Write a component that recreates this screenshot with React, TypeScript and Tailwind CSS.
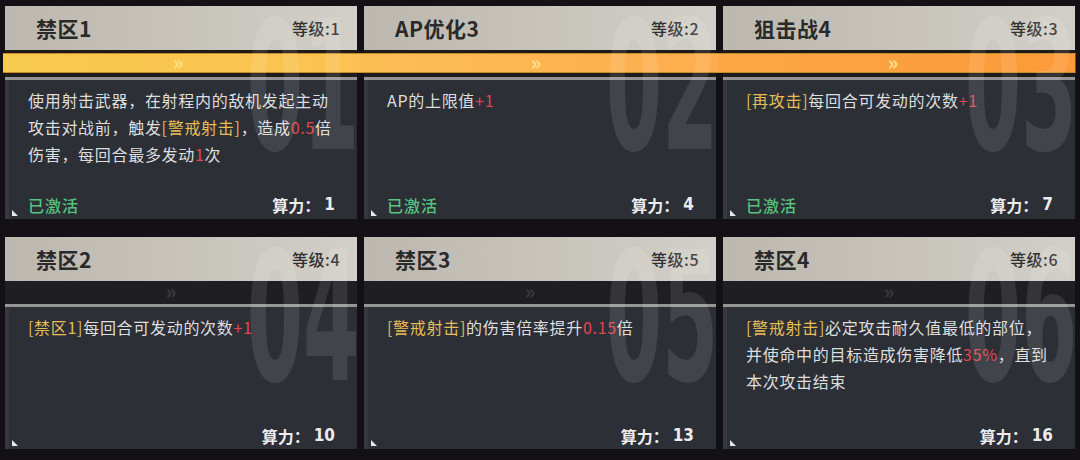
import React from 'react';

type Seg = [string, ('y' | 'r')?];

type Card = {
  title: string;
  level: number;
  mark: string;
  lines: Seg[][];
  active: boolean;
  power: number;
  bar: string;
};

const cards: Card[] = [
  {
    title: '禁区1',
    level: 1,
    mark: '01',
    lines: [
      [['使用射击武器，在射程内的敌机发起主动']],
      [['攻击对战前，触发'], ['[警戒射击]', 'y'], ['，造成'], ['0.5', 'r'], ['倍']],
      [['伤害，每回合最多发动'], ['1', 'r'], ['次']],
    ],
    active: true,
    power: 1,
    bar: 'bg-gradient-to-r from-[#f6cb4c] to-[#fcc152] -ml-[2px] -mr-[4px]',
  },
  {
    title: 'AP优化3',
    level: 2,
    mark: '02',
    lines: [[['AP的上限值'], ['+1', 'r']]],
    active: true,
    power: 4,
    bar: 'bg-gradient-to-r from-[#fdbe56] to-[#fdac4d] -mx-[4px]',
  },
  {
    title: '狙击战4',
    level: 3,
    mark: '03',
    lines: [[['[再攻击]', 'y'], ['每回合可发动的次数'], ['+1', 'r']]],
    active: true,
    power: 7,
    bar: 'bg-gradient-to-r from-[#fca746] to-[#fb9a38] -ml-[4px] -mr-[1px] border-r border-r-[#7a4a18]',
  },
  {
    title: '禁区2',
    level: 4,
    mark: '04',
    lines: [[['[禁区1]', 'y'], ['每回合可发动的次数'], ['+1', 'r']]],
    active: false,
    power: 10,
    bar: '',
  },
  {
    title: '禁区3',
    level: 5,
    mark: '05',
    lines: [[['[警戒射击]', 'y'], ['的伤害倍率提升'], ['0.15', 'r'], ['倍']]],
    active: false,
    power: 13,
    bar: '',
  },
  {
    title: '禁区4',
    level: 6,
    mark: '06',
    lines: [
      [['[警戒射击]', 'y'], ['必定攻击耐久值最低的部位，']],
      [['并使命中的目标造成伤害降低'], ['35%', 'r'], ['，直到']],
      [['本次攻击结束']],
    ],
    active: false,
    power: 16,
    bar: '',
  },
];

const SkillCard: React.FC<{ card: Card; top: boolean }> = ({ card, top }) => {
  return (
    <div className="relative flex flex-col">
      <div className="h-[44px] flex items-center justify-between pl-[31px] pr-[17px] bg-gradient-to-r from-[#bcb8af] to-[#d2cfc8]">
        <span className="text-[21px] font-bold text-[#2a2a2a] tracking-[0.5px] leading-none">{card.title}</span>
        <span className="text-[16px] font-medium text-[#303030] leading-none tracking-[0.5px]">等级:{card.level}</span>
      </div>
      {top ? (
        <>
          <div className="h-[3px] bg-[#1d1a17]"></div>
          <div className={`h-[20px] flex items-center justify-center border-y border-[#c68a2c] ${card.bar}`}>
            <span className="text-[20px] font-bold leading-none text-[#ffe08c] -mt-[3px] -ml-[8px]">»</span>
          </div>
          <div className="h-[4px] bg-[#1d1b1c]"></div>
        </>
      ) : (
        <div className="h-[23px] flex items-center justify-center bg-[#1f1f23]">
          <span className="text-[20px] font-bold leading-none text-[#3a3a40] -mt-[3px] -ml-[20px]">»</span>
        </div>
      )}
      <div className="h-[3px] bg-[#969696]"></div>
      <div className={`relative ${top ? 'h-[139px]' : 'h-[142px]'} flex flex-col bg-[#2c2f36] border-l-[4px] border-[#363940] pl-[19px] pr-[22px] pt-[7px]`}>
        <div className="text-[16px] leading-[27px] tracking-[0.7px] text-[#dedede] whitespace-nowrap">
          {card.lines.map((line, i) => (
            <div key={i}>
              {line.map(([t, k], j) => (
                <span key={j} className={k === 'y' ? 'text-[#e6bd57]' : k === 'r' ? 'text-[#e4464f]' : ''}>
                  {t}
                </span>
              ))}
            </div>
          ))}
        </div>
        <div className={`mt-auto flex items-center justify-between h-[20px] ${top ? 'mb-[4px]' : 'mb-[3px]'}`}>
          <span className="text-[16px] font-medium text-[#56c47f] tracking-[1px]">{card.active ? '已激活' : ''}</span>
          <span className="text-[16px] font-bold text-[#ececec] flex items-center">
            算力：
            <span className="font-['DejaVu_Sans_Condensed',sans-serif] text-[17px] ml-[4px]">{card.power}</span>
          </span>
        </div>
        <div className="absolute left-[3px] bottom-[3px] w-0 h-0 border-l-[6px] border-t-[6px] border-l-[#e8e8e8] border-t-transparent"></div>
      </div>
      <div className="absolute inset-0 overflow-hidden pointer-events-none">
        <div className="absolute top-[-9px] right-[-2px] origin-top-right scale-x-50 font-['DejaVu_Sans_Condensed',sans-serif] font-bold text-[180px] leading-none text-white/10">
          {card.mark}
        </div>
      </div>
    </div>
  );
};

export default function App() {
  return (
    <div className="w-[1080px] h-[460px] bg-[#131116] px-[5px] pt-[6px] overflow-hidden font-['Noto_Sans_CJK_SC',sans-serif]">
      <div className="grid grid-cols-3 gap-x-[7px] gap-y-[18px]">
        {cards.map((c, i) => (
          <SkillCard key={i} card={c} top={i < 3} />
        ))}
      </div>
    </div>
  );
}
